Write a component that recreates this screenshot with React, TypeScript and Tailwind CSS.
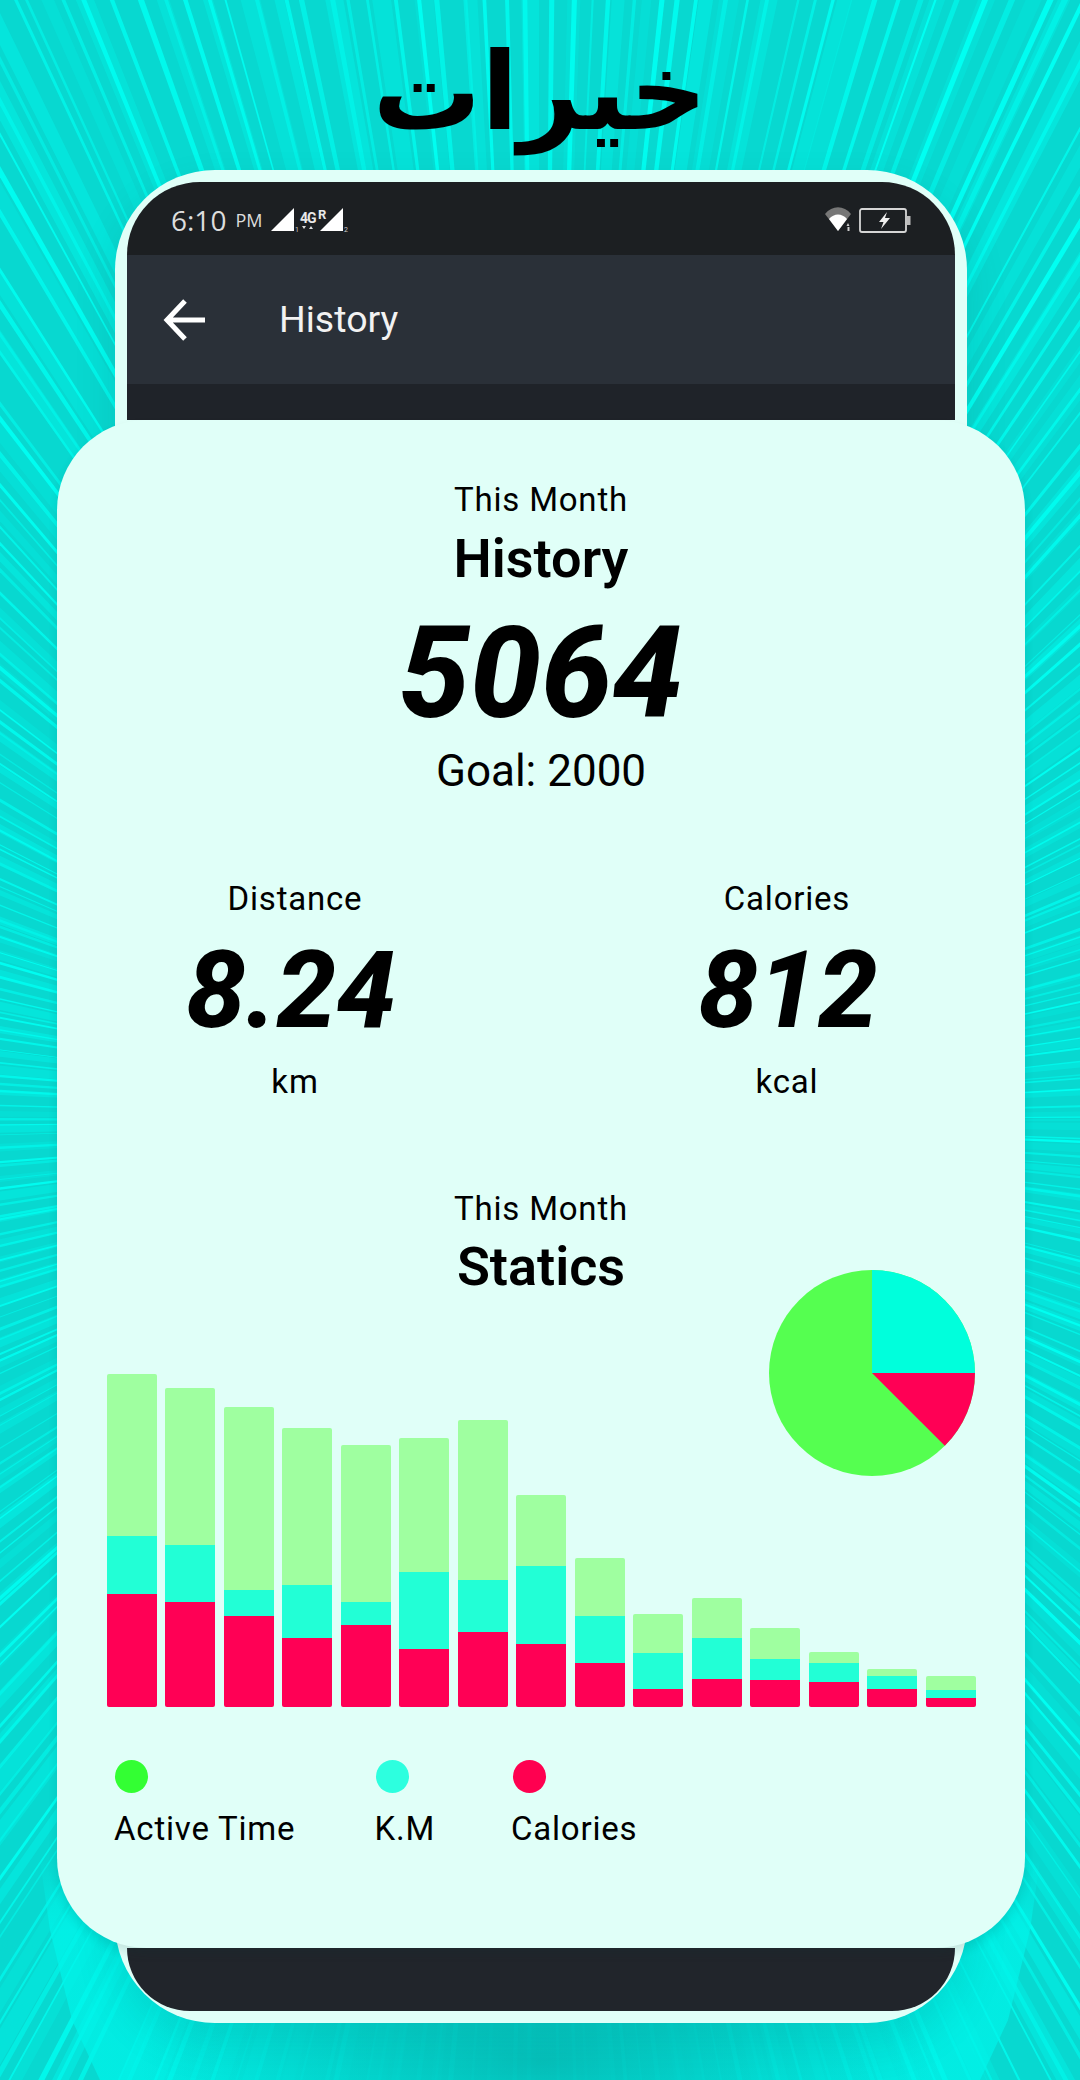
import React from 'react';

// zoomed-in measures: [total, teal + red, red] in px
const bars = [
  [333, 171, 113],
  [319, 162, 105],
  [300, 117, 91],
  [279, 122, 69],
  [262, 105, 82],
  [269, 135, 58],
  [287, 127, 75],
  [212, 141, 63],
  [149, 91, 44],
  [93, 54, 18],
  [109, 69, 28],
  [79, 48, 27],
  [55, 44, 25],
  [38, 31, 18],
  [31, 17, 9],
];

const makeRays = (count: number, seed: number, minHalf: number, maxHalf: number, minOp: number, maxOp: number) =>
  Array.from({ length: count }).map((_, i) => {
    const r1 = Math.abs(Math.sin((i + seed) * 12.9898) * 43758.5453) % 1;
    const r2 = Math.abs(Math.sin((i + seed) * 78.233) * 12543.123) % 1;
    const r3 = Math.abs(Math.sin((i + seed) * 37.719) * 9831.77) % 1;
    const angle = ((i + r1 * 0.8) / count) * Math.PI * 2;
    const half = minHalf + r2 * (maxHalf - minHalf);
    const far = 2400;
    const cx = 540;
    const cy = 1120;
    const a = `${cx + Math.cos(angle - half) * far},${cy + Math.sin(angle - half) * far}`;
    const b = `${cx + Math.cos(angle + half) * far},${cy + Math.sin(angle + half) * far}`;
    return { points: `${cx},${cy} ${a} ${b}`, opacity: minOp + r3 * (maxOp - minOp) };
  });

const rays = [...makeRays(160, 500, 0.004, 0.009, 0.15, 0.35), ...makeRays(320, 0, 0.0008, 0.0026, 0.45, 1)];

const Backdrop = () => (
  <svg className="absolute inset-0" width="1080" height="2080" viewBox="0 0 1080 2080">
    <defs>
      <radialGradient id="under" cx="540" cy="2060" r="400" gradientUnits="userSpaceOnUse" gradientTransform="translate(0 1300) scale(1 0.37)">
        <stop offset="0" stopColor="#06b5b0" stopOpacity="0.8" />
        <stop offset="1" stopColor="#06b5b0" stopOpacity="0" />
      </radialGradient>
      <linearGradient id="halo" x1="0" y1="1860" x2="0" y2="1930" gradientUnits="userSpaceOnUse">
        <stop offset="0" stopColor="#00f4ea" stopOpacity="0" />
        <stop offset="1" stopColor="#00f4ea" stopOpacity="0.7" />
      </linearGradient>
    </defs>
    <rect width="1080" height="2080" fill="#08d8d0" />
    {rays.map((ray, i) => (
      <polygon key={i} points={ray.points} fill="#00fff2" opacity={ray.opacity} />
    ))}
    <path d="M40 1860 L50 1930 L72 2020 L100 2080 L980 2080 L1008 2020 L1030 1930 L1040 1860 Z" fill="url(#halo)" />
    <rect x="100" y="1990" width="880" height="90" fill="url(#under)" />
  </svg>
);

const StatusLeft = () => (
  <svg width="90" height="30" viewBox="0 0 90 30" className="mt-[3px] ml-[8px]">
    <path d="M1 24 L24 1 V24 Z" fill="#fff" />
    <text x="25" y="25" fontSize="7" fill="#ccc" fontFamily="Roboto, sans-serif">1</text>
    <text x="30" y="16" fontSize="14" fontWeight="700" fill="#e8e8e8" letterSpacing="-1" fontFamily="Roboto, sans-serif">4G</text>
    <path d="M32 19 l2 3 l2 -3 Z M39 22 l2 -3 l2 3 Z" fill="#ddd" />
    <text x="48" y="12" fontSize="13" fontWeight="700" fill="#e8e8e8" fontFamily="Roboto, sans-serif">R</text>
    <path d="M50 24 L73 1 V24 Z" fill="#fff" />
    <text x="74" y="25" fontSize="7" fill="#ccc" fontFamily="Roboto, sans-serif">2</text>
  </svg>
);

const StatusRight = () => (
  <svg width="90" height="30" viewBox="0 0 90 30" className="mt-[2px]">
    <path d="M1 9 C8 0 20 0 27 9 L14 26 Z" fill="#777" />
    <path d="M5 14 C10 8 18 8 23 14 L14 26 Z" fill="#fff" />
    <path d="M24 18 l1.5 3 h-3 Z M23.500 22 h2 v4 h-2 Z" fill="#ccc" />
    <rect x="36" y="4" width="46" height="23" rx="2" fill="none" stroke="#d5d5d5" strokeWidth="1.800" />
    <rect x="83" y="11" width="3.500" height="9" fill="#bbb" />
    <path d="M63 7 L55 17 H59.500 L57 24 L66 13 H61 Z" fill="#eee" />
  </svg>
);

const Pie = () => (
  <svg width="206" height="206" viewBox="0 0 206 206" className="absolute right-[1px] top-[-97px]">
    <circle cx="103" cy="103" r="103" fill="#55ff50" />
    <path d="M103 103 V0 A103 103 0 0 1 206 103 Z" fill="#00ffdc" />
    <path d="M103 103 H206 A103 103 0 0 1 175.800 175.800 Z" fill="#ff0055" />
  </svg>
);

const StatColumn = ({ label, value, unit, nudge }: { label: string; value: string; unit: string; nudge: string }) => (
  <div className="flex w-[300px] flex-col items-center">
    <div className="text-[33px] leading-[40px] tracking-[0.8px]">{label}</div>
    <div className={`mt-[22px] text-[107px] leading-[100px] font-extrabold italic ${nudge}`}>{value}</div>
    <div className="mt-[21px] text-[33px] leading-[40px] tracking-[0.8px]">{unit}</div>
  </div>
);

const LegendItem = ({ color, label, dot, item }: { color: string; label: string; dot: string; item: string }) => (
  <div className={`flex flex-col ${item}`}>
    <div className={`h-[33px] w-[33px] rounded-full ${color} ${dot}`} />
    <div className="mt-[16px] text-[33px] leading-[40px] tracking-[0.8px]">{label}</div>
  </div>
);

export default function App() {
  return (
    <div className="relative h-[2080px] w-[1080px] overflow-hidden font-['Roboto',sans-serif] text-black">
      <Backdrop />
      <div className="relative">
        <div dir="rtl" className="flex h-[170px] items-center justify-center pt-[14px] font-['DejaVu_Sans',sans-serif] text-[108px] leading-none font-bold">
          خیرات
        </div>
        <div className="ml-[115px] flex h-[1853px] w-[852px] flex-col rounded-[100px] bg-[#e0fff8] p-[12px] shadow-[0_20px_40px_rgba(0,90,90,0.15)]">
          <div className="flex h-[73px] items-center justify-between rounded-t-[88px] bg-[#1c1f22] pr-[41px] pl-[44px]">
            <div className="mt-[3px] flex items-center text-[#ddd]">
              <span className="font-['Open_Sans',sans-serif] text-[28px]">6:10</span>
              <span className="ml-[9px] font-['Open_Sans',sans-serif] text-[18px]">PM</span>
              <StatusLeft />
            </div>
            <StatusRight />
          </div>
          <div className="flex h-[129px] items-center bg-[#2a3038] pl-[36px] text-[37.5px] text-[#f2f2f2]">
            <svg width="42" height="44" viewBox="0 0 42 44" fill="none" stroke="#fff" strokeWidth="5" className="mr-[74px]">
              <path d="M42 22 H4 M22 3 L4 22 L22 41" />
            </svg>
            History
          </div>
          <div className="h-[36px] bg-[#1f2329]" />
          <div className="relative z-10 -mx-[70px] flex h-[1528px] shrink-0 flex-col items-center rounded-[90px] bg-[#e0fff8] pt-[60px] shadow-[0_6px_10px_rgba(0,60,60,0.12)]">
            <div className="text-[33px] leading-[40px] tracking-[0.8px]">This Month</div>
            <div className="mt-[9px] text-[54px] leading-[60px] font-semibold">History</div>
            <div className="mt-[25px] text-[127px] leading-[120px] font-extrabold italic">5064</div>
            <div className="mt-[12px] text-[44px] leading-[50px]">Goal: 2000</div>
            <div className="mt-[83px] flex w-full justify-between px-[88px]">
              <StatColumn label="Distance" value="8.24" unit="km" nudge="mr-[8px]" />
              <StatColumn label="Calories" value="812" unit="kcal" nudge="ml-[2px]" />
            </div>
            <div className="mt-[87px] text-[33px] leading-[40px] tracking-[0.8px]">This Month</div>
            <div className="mt-[8px] text-[54px] leading-[60px] font-semibold">Statics</div>
            <div className="relative mt-[70px] flex h-[340px] w-[869px] items-end justify-between">
              {bars.map(([total, lower, red], i) => (
                <div key={i} className="flex w-[50px] flex-col overflow-hidden rounded-[2px]">
                  <div className="bg-[#9fffa0]" style={{ height: total - lower }} />
                  <div className="bg-[#22ffd6]" style={{ height: lower - red }} />
                  <div className="bg-[#ff0055]" style={{ height: red }} />
                </div>
              ))}
              <Pie />
            </div>
            <div className="mt-[53px] flex w-full gap-[79px] pl-[57px]">
              <LegendItem color="bg-[#33ff33]" label="Active Time" dot="ml-[1px]" item="" />
              <LegendItem color="bg-[#2dffdf]" label="K.M" dot="ml-[2px]" item="" />
              <LegendItem color="bg-[#ff0050]" label="Calories" dot="ml-[2px]" item="-ml-[3px]" />
            </div>
          </div>
          <div className="flex-1 rounded-b-[88px] bg-[#21252b]" />
        </div>
      </div>
    </div>
  );
}
